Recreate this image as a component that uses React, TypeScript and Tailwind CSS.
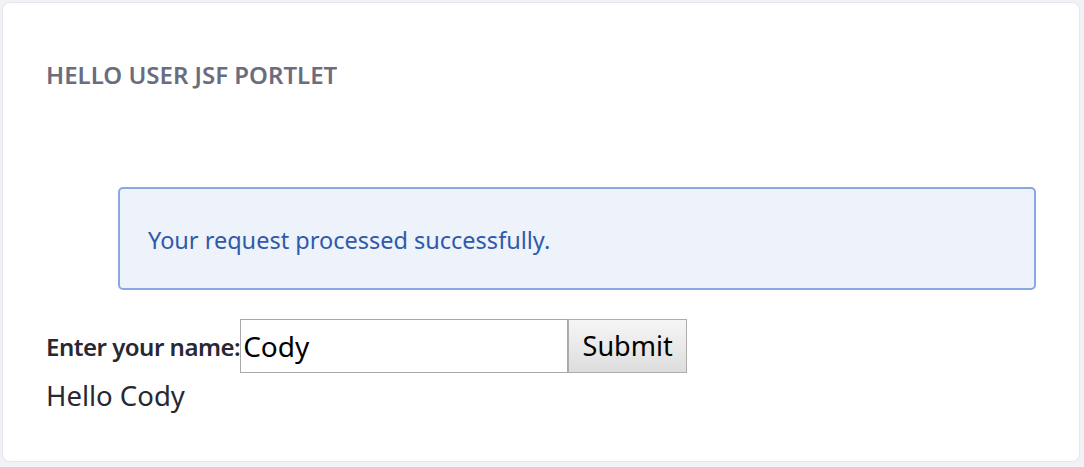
export default function App() {
  return (
    <div className="min-h-[467px] bg-[#f1f2f5] p-[2px] pr-[4px] pb-[5px]" style={{ fontFamily: '"Noto Sans", "Open Sans", sans-serif' }}>
      <div className="h-[460px] rounded-[8px] border border-[#e7e7ed] bg-white pl-[43px] pr-[43px] pt-[56px]">
        <h2 className="text-[24px] font-semibold leading-[32px] text-[#6b6c7e]">HELLO USER JSF PORTLET</h2>

        <div className="ml-[72px] mt-[96px] flex h-[103px] items-center rounded-[5px] border-2 border-[#89a7e0] bg-[#eef2fa] pl-[28px] pt-[4px]">
          <span className="text-[23.5px] text-[#2e5aac]">Your request processed successfully.</span>
        </div>

        <form className="mt-[29px]" onSubmit={(e) => e.preventDefault()}>
          <div className="flex items-center">
            <label className="pt-[2px] text-[24px] font-semibold text-[#272833] tracking-[-0.5px]" htmlFor="name">
              Enter your name:
            </label>
            <input
              id="name"
              defaultValue="Cody"
              className="h-[54px] w-[328px] border border-[#a9a9a9] bg-white px-[2px] text-[28px] text-black outline-none"
            />
            <button
              type="submit"
              className="h-[54px] w-[119px] border border-[#adadad] bg-gradient-to-b from-[#f6f6f6] to-[#dddddd] text-[27px] text-black"
            >
              Submit
            </button>
          </div>
          <p className="mt-[3px] text-[27.5px] leading-[40px] text-[#272833]">Hello Cody</p>
        </form>
      </div>
    </div>
  )
}
